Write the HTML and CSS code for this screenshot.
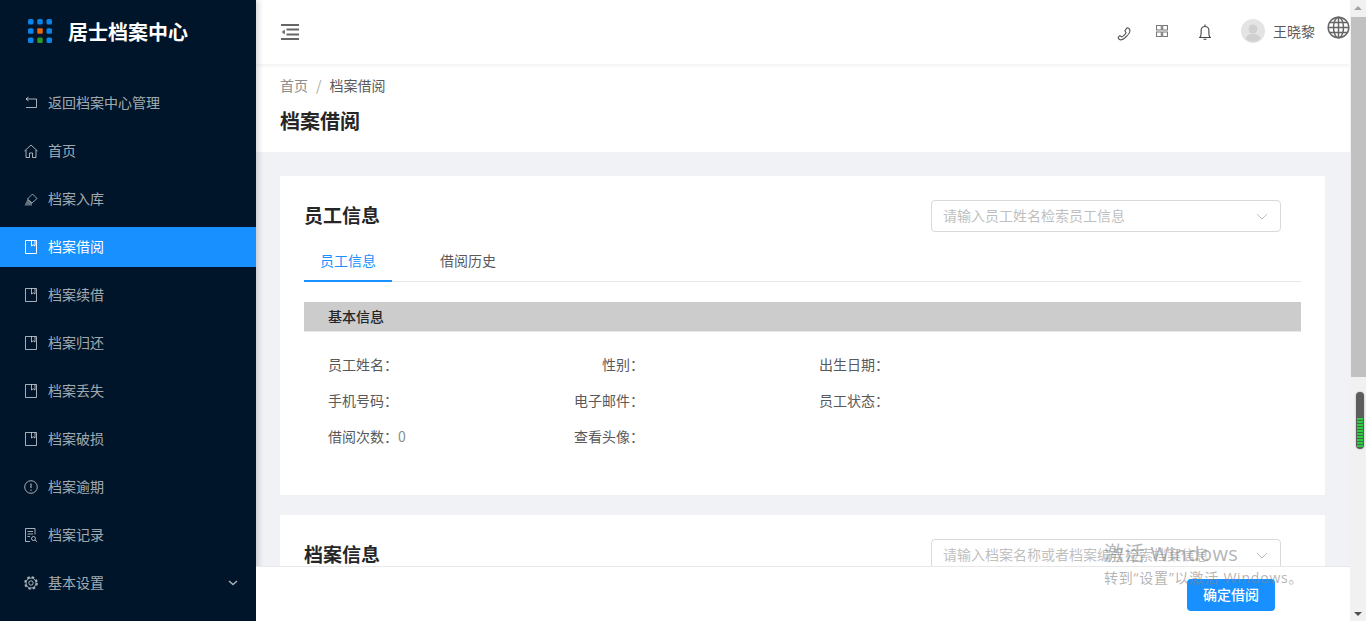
FILE: index.html
```html
<!DOCTYPE html>
<html lang="zh-CN">
<head>
<meta charset="utf-8">
<title>档案借阅</title>
<link rel="stylesheet" href="styles.css">
</head>
<body>
<svg class="defs" width="0" height="0">
  <symbol id="book" viewBox="0 0 12 14"><path d="M.5.5h11v13H.5zM6.500.5v5.500l1.750-1.200L10 6V.5" fill="none" stroke="currentColor" stroke-width="1"/></symbol>
</svg>
<aside class="sidebar">
  <div class="logo">
    <svg class="logo-mark" width="24" height="24" viewBox="0 0 24 24">
      <g fill="#0a84e8"><rect x="0" y="0" width="5.500" height="5.500" rx="1.500"/><rect x="9.250" y="0" width="5.500" height="5.500" rx="1.500"/><rect x="18.500" y="0" width="5.500" height="5.500" rx="1.500"/><rect x="0" y="9.250" width="5.500" height="5.500" rx="1.500"/><rect x="18.500" y="9.250" width="5.500" height="5.500" rx="1.500"/><rect x="0" y="18.500" width="5.500" height="5.500" rx="1.500"/><rect x="18.500" y="18.500" width="5.500" height="5.500" rx="1.500"/></g>
      <rect x="9.250" y="9.250" width="5.500" height="5.500" rx="1" fill="#e8660c"/><rect x="9.250" y="18.500" width="5.500" height="5.500" rx="1.500" fill="#2a9a2a"/>
    </svg>
    <span class="logo-text">居士档案中心</span>
  </div>
  <nav class="menu">
    <a class="item"><svg class="ic" viewBox="0 0 14 14"><path d="M4.500 1 2 3l2.500 2M2 3h10.500v8.500H2" fill="none" stroke="currentColor"/></svg><span>返回档案中心管理</span></a>
    <a class="item"><svg class="ic" viewBox="0 0 14 14"><path d="M.5 7 7 1l6.500 6M2 6v7.500h3.500V9h3v4.500H12V6" fill="none" stroke="currentColor"/></svg><span>首页</span></a>
    <a class="item"><svg class="ic" viewBox="0 0 14 14"><path d="M8.500 2 13 6.500 8 11 3.500 7z" fill="none" stroke="currentColor" stroke-width=".9"/><path d="M3.500 7 .5 13.500h7.500L8 11z" fill="currentColor" fill-opacity=".6"/></svg><span>档案入库</span></a>
    <a class="item active"><svg class="ic book"><use href="#book"/></svg><span>档案借阅</span></a>
    <a class="item"><svg class="ic book"><use href="#book"/></svg><span>档案续借</span></a>
    <a class="item"><svg class="ic book"><use href="#book"/></svg><span>档案归还</span></a>
    <a class="item"><svg class="ic book"><use href="#book"/></svg><span>档案丢失</span></a>
    <a class="item"><svg class="ic book"><use href="#book"/></svg><span>档案破损</span></a>
    <a class="item"><svg class="ic" viewBox="0 0 14 14"><circle cx="7" cy="7" r="6.300" fill="none" stroke="currentColor"/><path d="M7 3.500v4.500M7 9.500v1.200" stroke="currentColor" stroke-width="1.200" fill="none"/></svg><span>档案逾期</span></a>
    <a class="item"><svg class="ic" viewBox="0 0 14 14"><path d="M6 13.500H1.500V.5h9.500v6M3.500 3.500h5.500M3.500 6h5.500M3.500 8.500h2.500" fill="none" stroke="currentColor"/><circle cx="9.500" cy="10.500" r="2" fill="none" stroke="currentColor"/><path d="m11 12 2 1.800" stroke="currentColor" fill="none"/></svg><span>档案记录</span></a>
    <a class="item"><svg class="ic" viewBox="0 0 14 14"><circle cx="7" cy="7" r="5" fill="none" stroke="currentColor"/><circle cx="7" cy="7" r="6" fill="none" stroke="currentColor" stroke-width="1.600" stroke-dasharray="2.600 2.112"/><circle cx="7" cy="7" r="2.200" fill="none" stroke="currentColor"/></svg><span>基本设置</span><svg class="caret" viewBox="0 0 10 6"><path d="m1 1 4 3.500L9 1" fill="none" stroke="currentColor" stroke-width="1.600"/></svg></a>
  </nav>
</aside>
<div class="viewport">
  <main class="main">
    <header class="topbar">
      <svg class="fold" width="18" height="16" viewBox="0 0 18 16"><path d="M0 1h18M5.500 5.500H18M5.500 10.500H18M0 15h18" stroke="#666" stroke-width="1.800" fill="none"/><path d="M3.800 5.500v5L.8 8z" fill="#666"/></svg>
      <div class="top-right">
        <svg class="t-ic phone" viewBox="0 0 14 14"><path d="M9.800 1c1-.6 2.600.6 3 1.700.5 1.500-1.300 4.700-3.500 6.800-2.200 2.200-4.800 3.800-6.300 3.300-1-.4-2.200-1.800-1.600-2.800l1.500-1.300 2 1.200 1.500-1c1-.8 2.100-2.100 2.600-3.100L7.900 3.800z" fill="none" stroke="#555" stroke-width="1.100"/></svg>
        <svg class="t-ic apps" viewBox="0 0 12 12"><path d="M.5.500h4.800v4.500H.5zM6.700.500h4.800v4.500H6.700zM.5 7h4.800v4.500H.5zM6.700 7h4.800v4.500H6.700z" fill="none" stroke="#777" stroke-width="1.100"/></svg>
        <svg class="t-ic bell" viewBox="0 0 12 16"><path d="M.8 13.500h10.400c-1-1-1.300-2-1.300-3.500V6.500C9.900 4 8.500 2.500 6 2.500S2.100 4 2.100 6.500V10C2.100 11.500 1.800 12.500.8 13.500zM6 .5v2M4.500 15.300h3" fill="none" stroke="#444" stroke-width="1.100"/></svg>
        <span class="avatar"><svg viewBox="0 0 24 24" width="24" height="24"><circle cx="12" cy="12" r="12" fill="#e4e4e4"/><circle cx="12" cy="10" r="4.500" fill="#d0d0d0"/><path d="M4.500 20c1-4 4-5 7.500-5s6.500 1 7.500 5a12 12 0 0 1-15 0z" fill="#d0d0d0"/></svg></span>
        <span class="user">王晓黎</span>
      </div>
      <svg class="globe" width="23" height="23" viewBox="0 0 23 23"><g fill="none" stroke="#666" stroke-width="1.500"><circle cx="11.500" cy="11.500" r="10.300"/><ellipse cx="11.500" cy="11.500" rx="5" ry="10.300"/><path d="M11.500 1.200v20.600M1.200 11.500h20.600M2.600 6.500h17.800M2.600 16.500h17.800"/></g></svg>
    </header>
    <section class="page-head">
      <div class="crumbs"><span class="c-muted">首页</span><span class="c-sep">/</span><span class="c-cur">档案借阅</span></div>
      <h1 class="page-title">档案借阅</h1>
    </section>
    <div class="content">
      <section class="card card-emp">
        <div class="card-head">
          <h2 class="card-title">员工信息</h2>
          <div class="select"><span class="sel-text">请输入员工姓名检索员工信息</span><svg class="sel-arrow" viewBox="0 0 12 7"><path d="m1 1 5 5 5-5" fill="none" stroke="currentColor"/></svg></div>
        </div>
        <div class="tabs"><span class="tab on">员工信息</span><span class="tab">借阅历史</span></div>
        <div class="band">基本信息</div>
        <div class="info">
          <div class="cell c1">员工姓名：</div><div class="cell c2">性别：</div><div class="cell c3">出生日期：</div>
          <div class="cell c1">手机号码：</div><div class="cell c2">电子邮件：</div><div class="cell c3">员工状态：</div>
          <div class="cell c1">借阅次数：<span class="val">0</span></div><div class="cell c2">查看头像：</div><div class="cell c3"></div>
        </div>
      </section>
      <section class="card">
        <div class="card-head">
          <h2 class="card-title">档案信息</h2>
          <div class="select"><span class="sel-text">请输入档案名称或者档案编号检索档案信息</span><svg class="sel-arrow" viewBox="0 0 12 7"><path d="m1 1 5 5 5-5" fill="none" stroke="currentColor"/></svg></div>
        </div>
      </section>
    </div>
    <footer class="footbar"><button class="primary">确定借阅</button></footer>
  </main>
  <div class="scrollbar">
    <span class="arrow up"></span>
    <span class="thumb"></span>
    <span class="arrow down"></span>
    <span class="widget"><span class="widget-fill"></span></span>
  </div>
</div>
<div class="watermark"><div class="wm1">激活 Windows</div><div class="wm2">转到“设置”以激活 Windows。</div></div>
</body>
</html>
```
FILE: styles.css
```css
* { box-sizing: border-box; }
html, body { margin: 0; height: 621px; overflow: hidden; }
body {
  display: flex;
  font-family: "Noto Sans CJK SC", "Liberation Sans", sans-serif;
  font-size: 14px;
  color: #595959;
  background: #fff;
}
.defs { position: absolute; }
.sidebar { width: 256px; flex: none; height: 621px; background: #001529; color: rgba(255,255,255,.65); position: relative; z-index: 3; box-shadow: 2px 0 6px rgba(0,21,41,.2); }
.logo { height: 64px; display: flex; align-items: center; padding-left: 28px; gap: 16px; }
.logo-mark { flex: none; margin-top: -2px; }
.logo-text { color: #fff; font-size: 20px; font-weight: 700; line-height: 28px; margin-top: -1px; }
.menu { padding-top: 19px; display: flex; flex-direction: column; }
.item { height: 40px; margin-bottom: 8px; display: flex; align-items: center; padding: 0 0 2px 24px; }
.item.active { background: #1890ff; color: #fff; }
.ic { width: 14px; height: 14px; flex: none; margin: 2px 10px 0 0; }
.ic.book { width: 12px; height: 14px; margin: 2px 11px 0 1px; }
.caret { width: 10px; height: 6px; margin: 2px 18px 0 auto; }
.viewport { flex: 1; display: flex; min-width: 0; position: relative; }
.main { flex: 1; min-width: 0; display: flex; flex-direction: column; position: relative; background: #f0f2f5; overflow: hidden; }
.topbar { height: 64px; flex: none; background: #fff; box-shadow: 0 1px 4px rgba(0,21,41,.08); display: flex; align-items: center; padding-left: 25px; position: relative; z-index: 1; }
.top-right { margin-left: auto; display: flex; align-items: center; margin-right: 35px; }
.t-ic { flex: none; }
.phone { width: 14px; height: 14px; margin: 3px 25px 0 0; }
.apps { width: 12px; height: 12px; margin: -2px 31px 0 0; }
.bell { width: 12px; height: 16px; margin: 0 30px 0 0; }
.avatar { width: 24px; height: 24px; margin-right: 8px; margin-top: -2px; }
.user { font-size: 14px; line-height: 22px; color: #595959; margin-top: -2px; }
.globe { position: absolute; right: 0; top: 16px; }
.page-head { height: 88px; flex: none; background: #fff; padding: 11px 24px 0; }
.crumbs { line-height: 20px; display: flex; }
.c-muted { color: #8c8c8c; }
.c-sep { color: #aaa; margin: 0 8px; }
.c-cur { color: #595959; }
.page-title { margin: 13px 0 0; font-size: 20px; line-height: 26px; font-weight: 700; color: #262626; }
.content { padding: 24px 25px 0 24px; }
.card { background: #fff; padding: 24px 24px 0; margin-bottom: 20px; }
.card-emp { height: 319px; }
.card-head { display: flex; align-items: center; height: 32px; }
.card-title { margin: -2px 0 0; font-size: 19px; line-height: 32px; font-weight: 700; color: #262626; }
.select { width: 350px; height: 32px; margin-left: auto; margin-right: 20px; border: 1px solid #d9d9d9; border-radius: 4px; padding: 0 12px 0 11px; display: flex; align-items: center; justify-content: space-between; color: #bfbfbf; background: #fff; }
.sel-text { margin-top: -2px; }
.sel-arrow { width: 12px; height: 7px; color: #bfbfbf; }
.tabs { display: flex; height: 50px; padding-top: 8px; border-bottom: 1px solid #e8e8e8; }
.tab { width: 88px; text-align: center; line-height: 40px; height: 42px; }
.tab + .tab { margin-left: 32px; }
.tab.on { color: #1890ff; border-bottom: 2px solid #1890ff; }
.band { height: 30px; margin-top: 20px; background: #cccccc; border-bottom: 1px solid #e8e8e8; padding-left: 24px; line-height: 28px; font-weight: 500; color: #262626; }
.info { display: grid; grid-template-columns: 216px 100px 1fr; grid-auto-rows: 36px; padding: 14px 0 0 24px; }
.cell { line-height: 36px; color: #595959; }
.c2 { text-align: right; }
.c3 { padding-left: 175px; }
.val { color: #8c8c8c; }
.footbar { position: absolute; left: 0; right: 0; bottom: 0; height: 55px; background: #fff; border-top: 1px solid #e8e8e8; display: flex; justify-content: flex-end; align-items: flex-start; padding: 12px 75px 0 0; z-index: 4; }
.primary { width: 88px; height: 32px; border: 0; border-radius: 4px; background: #1890ff; color: #fff; font: 500 14px "Noto Sans CJK SC", sans-serif; padding: 0 0 2px; }
.scrollbar { width: 16px; flex: none; background: #f1f1f1; position: relative; }
.thumb { position: absolute; left: 1px; right: 0; top: 17px; height: 360px; background: #c1c1c1; }
.arrow { position: absolute; left: 4px; width: 0; height: 0; border-left: 4px solid transparent; border-right: 4px solid transparent; }
.arrow.up { top: 6px; border-bottom: 4px solid #a3a3a3; }
.arrow.down { bottom: 5px; border-top: 4px solid #505050; }
.widget { position: absolute; left: 6px; top: 392px; width: 8px; height: 57px; background: #5c5c5c; border-radius: 4px; overflow: hidden; box-shadow: 0 0 2px rgba(0,0,0,.3); }
.widget-fill { position: absolute; left: 1px; right: 1px; top: 26px; height: 29px; background: repeating-linear-gradient(to bottom, #2ecc40 0 2px, #3f6a48 2px 3px); }
.watermark { position: absolute; left: 1104px; top: 541px; color: rgba(130,130,130,.6); z-index: 5; pointer-events: none; white-space: nowrap; font-family: "Open Sans", "Noto Sans CJK SC", sans-serif; }
.wm1 { font-size: 20px; line-height: 26px; letter-spacing: .4px; }
.wm2 { font-size: 14px; line-height: 24px; margin-top: -1px; letter-spacing: .8px; }
```
